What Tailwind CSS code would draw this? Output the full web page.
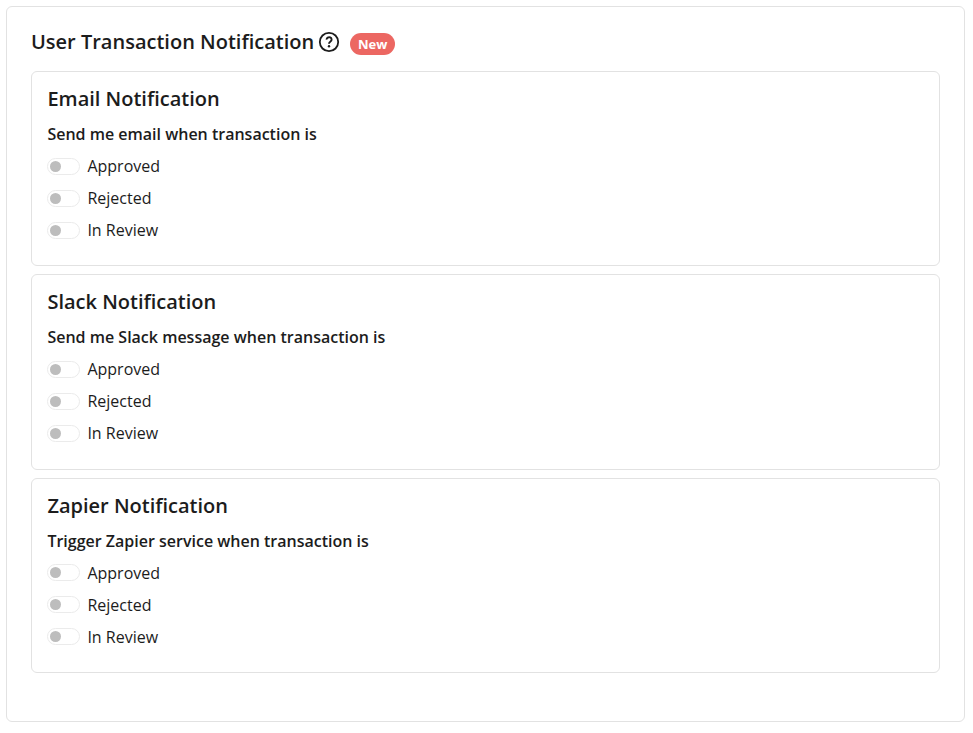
<!DOCTYPE html>
<html lang="en">
<head>
  <meta charset="UTF-8" />
  <meta name="viewport" content="width=device-width, initial-scale=1.0"/>
  <title>User Transaction Notification</title>
  <script src="https://cdn.jsdelivr.net/npm/@tailwindcss/browser@4"></script>
</head>
<body class="bg-white font-['Open_Sans',sans-serif] text-[#1c1c1c] h-[733px] overflow-hidden pt-1.5 pl-1.5">
  <main class="w-[959px] h-[716px] border border-[#e2e2e2] rounded-md px-6 pt-[23px]">

    <header class="flex items-center h-6 mb-[17px]">
      <h1 class="text-xl leading-6 font-semibold whitespace-nowrap">User Transaction Notification</h1>
      <svg class="ml-[3px] size-6 shrink-0" viewBox="0 0 24 24" fill="none" stroke="#1c1c1c">
        <circle cx="12" cy="12" r="9.2" stroke-width="1.8"/>
        <path d="M9.600 9.600a2.500 2.300 0 1 1 3.900 1.800c-.9.650-1.500 1.100-1.500 2.300" stroke-width="1.900"/>
        <circle cx="12" cy="16.200" r="1.200" fill="#1c1c1c" stroke="none"/>
      </svg>
      <span class="ml-[9px] mt-1 h-[22px] w-[45px] rounded-full bg-[#ec6762] text-white text-[13px] leading-[22px] font-bold text-center">New</span>
    </header>

    <div class="flex flex-col gap-[8.1px]">
      <!-- Email -->
      <section class="w-[909px] h-[195.3px] border border-[#e2e2e2] rounded-md px-[15.4px] pt-[15px]">
        <h2 class="text-xl leading-6 font-semibold">Email Notification</h2>
        <p class="mt-[11px] text-base leading-6 font-semibold">Send me email when transaction is</p>
        <ul class="mt-2 flex flex-col gap-2">
          <li class="flex items-center gap-[7.5px] leading-6"><span class="flex items-center w-[32.5px] h-[17px] rounded-full border border-[#ebebeb] pl-0.5"><i class="size-[11px] rounded-full bg-[#bdbdbd]"></i></span>Approved</li>
          <li class="flex items-center gap-[7.5px] leading-6"><span class="flex items-center w-[32.5px] h-[17px] rounded-full border border-[#ebebeb] pl-0.5"><i class="size-[11px] rounded-full bg-[#bdbdbd]"></i></span>Rejected</li>
          <li class="flex items-center gap-[7.5px] leading-6"><span class="flex items-center w-[32.5px] h-[17px] rounded-full border border-[#ebebeb] pl-0.5"><i class="size-[11px] rounded-full bg-[#bdbdbd]"></i></span>In Review</li>
        </ul>
      </section>

      <!-- Slack -->
      <section class="w-[909px] h-[195.3px] border border-[#e2e2e2] rounded-md px-[15.4px] pt-[15px]">
        <h2 class="text-xl leading-6 font-semibold">Slack Notification</h2>
        <p class="mt-[11px] text-base leading-6 font-semibold">Send me Slack message when transaction is</p>
        <ul class="mt-2 flex flex-col gap-2">
          <li class="flex items-center gap-[7.5px] leading-6"><span class="flex items-center w-[32.5px] h-[17px] rounded-full border border-[#ebebeb] pl-0.5"><i class="size-[11px] rounded-full bg-[#bdbdbd]"></i></span>Approved</li>
          <li class="flex items-center gap-[7.5px] leading-6"><span class="flex items-center w-[32.5px] h-[17px] rounded-full border border-[#ebebeb] pl-0.5"><i class="size-[11px] rounded-full bg-[#bdbdbd]"></i></span>Rejected</li>
          <li class="flex items-center gap-[7.5px] leading-6"><span class="flex items-center w-[32.5px] h-[17px] rounded-full border border-[#ebebeb] pl-0.5"><i class="size-[11px] rounded-full bg-[#bdbdbd]"></i></span>In Review</li>
        </ul>
      </section>

      <!-- Zapier -->
      <section class="w-[909px] h-[195.3px] border border-[#e2e2e2] rounded-md px-[15.4px] pt-[15px]">
        <h2 class="text-xl leading-6 font-semibold">Zapier Notification</h2>
        <p class="mt-[11px] text-base leading-6 font-semibold">Trigger Zapier service when transaction is</p>
        <ul class="mt-2 flex flex-col gap-2">
          <li class="flex items-center gap-[7.5px] leading-6"><span class="flex items-center w-[32.5px] h-[17px] rounded-full border border-[#ebebeb] pl-0.5"><i class="size-[11px] rounded-full bg-[#bdbdbd]"></i></span>Approved</li>
          <li class="flex items-center gap-[7.5px] leading-6"><span class="flex items-center w-[32.5px] h-[17px] rounded-full border border-[#ebebeb] pl-0.5"><i class="size-[11px] rounded-full bg-[#bdbdbd]"></i></span>Rejected</li>
          <li class="flex items-center gap-[7.5px] leading-6"><span class="flex items-center w-[32.5px] h-[17px] rounded-full border border-[#ebebeb] pl-0.5"><i class="size-[11px] rounded-full bg-[#bdbdbd]"></i></span>In Review</li>
        </ul>
      </section>
    </div>
  </main>
</body>
</html>
